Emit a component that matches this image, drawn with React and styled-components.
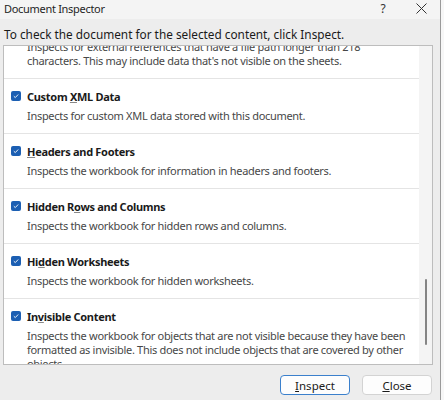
import React, { useEffect, useRef } from 'react';
import styled, { createGlobalStyle } from 'styled-components';

const GlobalStyle = createGlobalStyle`
  html, body {
    margin: 0;
    padding: 0;
    background: #f7f7f7;
  }
  body {
    font-family: "Noto Sans", "Open Sans", sans-serif;
  }
`;

const items = [
  {
    title: 'Long External File Paths',
    key: null,
    desc: "Inspects for external references that have a file path longer than 218 characters. This may include data that's not visible on the sheets.",
  },
  { title: 'Custom XML Data', key: 7, desc: 'Inspects for custom XML data stored with this document.' },
  { title: 'Headers and Footers', key: 0, desc: 'Inspects the workbook for information in headers and footers.' },
  { title: 'Hidden Rows and Columns', key: 8, desc: 'Inspects the workbook for hidden rows and columns.' },
  { title: 'Hidden Worksheets', key: 2, desc: 'Inspects the workbook for hidden worksheets.' },
  {
    title: 'Invisible Content',
    key: 2,
    desc: 'Inspects the workbook for objects that are not visible because they have been formatted as invisible. This does not include objects that are covered by other objects.',
  },
];

function Label({ text, at }) {
  if (at === null) return text;
  return (
    <>
      {text.slice(0, at)}
      <u>{text[at]}</u>
      {text.slice(at + 1)}
    </>
  );
}

export default function App() {
  const listRef = useRef(null);

  // the list is shown scrolled down a little, as in the screenshot
  useEffect(() => {
    if (listRef.current) listRef.current.scrollTop = 36;
  }, []);

  return (
    <Dialog>
      <GlobalStyle />
      <TitleBar>
        <Title>Document Inspector</Title>
        <TitleButton>?</TitleButton>
        <TitleButton>
          <svg width="11" height="11" viewBox="0 0 11 11">
            <path d="M0.5 0.5 L10.5 10.5 M10.5 0.5 L0.5 10.5" stroke="#333" strokeWidth="1" fill="none" />
          </svg>
        </TitleButton>
      </TitleBar>
      <Intro>To check the document for the selected content, click Inspect.</Intro>
      <ListBox>
        <ListContent ref={listRef}>
          {items.map((it, i) => (
            <Item key={i} $first={i === 0}>
              <ItemHead>
                <Check>
                  <svg width="8" height="8" viewBox="0 0 8 8">
                    <path d="M1.8 4.2 L3.3 5.6 L6.2 2.5" stroke="#fff" strokeWidth="0.9" fill="none" />
                  </svg>
                </Check>
                <ItemTitle>
                  <Label text={it.title} at={it.key} />
                </ItemTitle>
              </ItemHead>
              <ItemDesc>{it.desc}</ItemDesc>
            </Item>
          ))}
        </ListContent>
        <ScrollTrack>
          <ScrollThumb />
        </ScrollTrack>
      </ListBox>
      <Footer>
        <Button $primary>
          <u>I</u>nspect
        </Button>
        <Button>
          <u>C</u>lose
        </Button>
      </Footer>
    </Dialog>
  );
}

const Dialog = styled.div`
  width: 441px;
  height: 400px;
  box-sizing: border-box;
  background: #ededed;
  border-right: 1px solid #9a9a9a;
  display: flex;
  flex-direction: column;
  color: #1a1a1a;
`;

const TitleBar = styled.div`
  display: flex;
  align-items: center;
  height: 19px;
  padding: 0 0 2px 4px;
  box-sizing: border-box;
  background: #f4f4f4;
`;

const Title = styled.div`
  flex: 1;
  font-size: 11px;
  letter-spacing: -0.3px;
  line-height: 17px;
  color: #1f1f1f;
`;

const TitleButton = styled.div`
  width: 38px;
  display: flex;
  justify-content: center;
  align-items: center;
  font-size: 12px;
  color: #333;
`;

const Intro = styled.div`
  font-size: 11.8px;
  line-height: 16px;
  padding: 7px 4px 3px;
  color: #1a1a1a;
`;

const ListBox = styled.div`
  margin: 0 7px 0 3px;
  height: 320px;
  flex: none;
  box-sizing: border-box;
  border: 1px solid #bdbdbd;
  background: #fff;
  display: flex;
`;

const ListContent = styled.div`
  flex: 1;
  overflow: hidden;
`;

const ScrollTrack = styled.div`
  width: 13px;
  flex: none;
  background: #f4f4f4;
  display: flex;
  justify-content: center;
  padding-top: 233px;
  box-sizing: border-box;
`;

const ScrollThumb = styled.div`
  width: 2px;
  height: 66px;
  border-radius: 1px;
  background: #858585;
`;

const Item = styled.div`
  padding: 9px 8px 10px 7px;
  border-top: ${(p) => (p.$first ? 'none' : '1px solid #e4e4e4')};
`;

const ItemHead = styled.div`
  display: flex;
  align-items: center;
  height: 16px;
  gap: 6px;
`;

const Check = styled.div`
  width: 10px;
  height: 10px;
  flex: none;
  border-radius: 2px;
  background: #1c5fb3;
  display: flex;
  align-items: center;
  justify-content: center;
`;

const ItemTitle = styled.div`
  font-size: 11px;
  font-weight: 700;
  letter-spacing: -0.3px;
  color: #1a1a1a;
  u {
    text-decoration-color: #888;
  }
`;

const ItemDesc = styled.div`
  margin-top: 5px;
  padding-left: 16px;
  font-size: 11px;
  line-height: 14px;
  letter-spacing: -0.3px;
  color: #474747;
`;

const Footer = styled.div`
  display: flex;
  justify-content: flex-end;
  gap: 12px;
  padding: 10px 8px 0 0;
`;

const Button = styled.div`
  width: 70px;
  height: 20px;
  box-sizing: border-box;
  border-radius: 4px;
  border: 1px solid ${(p) => (p.$primary ? '#3b80cc' : '#d3d3d3')};
  background: #fdfdfd;
  display: flex;
  align-items: center;
  justify-content: center;
  font-size: 11.5px;
  color: #1a1a1a;
`;
